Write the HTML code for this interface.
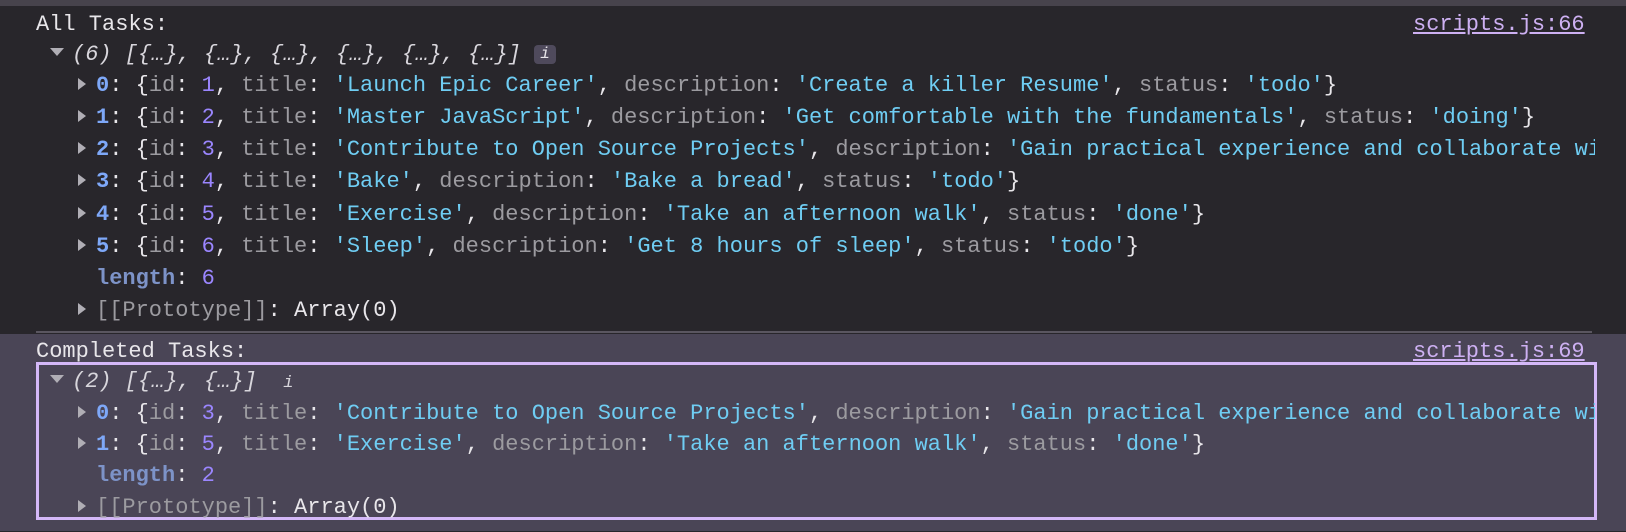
<!DOCTYPE html>
<html><head><style>
body{margin:0;width:1626px;height:532px;background:#28262b;overflow:hidden;font-family:"Liberation Mono","DejaVu Sans Mono",monospace;font-size:22px;color:#e8e6ea;position:relative}
.l{position:absolute;height:32px;line-height:32px;white-space:pre;overflow:hidden}
.k{color:#9c9ba0}.n{color:#9b86ff}.s{color:#6fcdf3}.i{color:#7ea8f8;font-weight:bold}.len{color:#7d93c8;font-weight:bold}
.t{display:inline-block;width:0;height:0;border-left:8px solid #b0aeb5;border-top:6px solid transparent;border-bottom:6px solid transparent;margin-right:10px;vertical-align:1px}
.d{display:inline-block;width:0;height:0;border-top:8px solid #b0aeb5;border-left:7px solid transparent;border-right:7px solid transparent;margin-right:8px;vertical-align:4px}
.it{font-style:italic;color:#d8d6dc}
.a{color:#cdb0f2;text-decoration:underline}
.ib{position:absolute;left:534px;top:45px;width:22px;height:19px;background:#4f4a5c;border-radius:4px;font-size:16px;line-height:19px;text-align:center;font-style:italic;color:#e8e6ea}
</style></head><body>
<div style="position:absolute;left:0;top:0;width:1626px;height:6px;background:#47434c"></div>
<div style="position:absolute;left:0;top:334px;width:1626px;height:197px;background:#4a4556"></div>
<div style="position:absolute;left:36px;top:331px;width:1556px;height:2px;background:#5a5660"></div>
<div style="position:absolute;left:36px;top:362px;width:1555px;height:152px;border:3px solid #d4b8f8"></div>

<div class="l" style="left:36px;top:9px">All Tasks:</div>
<div class="l a" style="left:1413px;top:9px">scripts.js:66</div>
<div class="l" style="left:50px;top:39px"><span class="d"></span><span class="it">(6) [{…}, {…}, {…}, {…}, {…}, {…}]</span></div>
<div class="ib">i</div>
<div class="l" style="left:78px;top:70px;width:1517px"><span class="t"></span><span class="i">0</span>: {<span class="k">id</span>: <span class="n">1</span>, <span class="k">title</span>: <span class="s">'Launch Epic Career'</span>, <span class="k">description</span>: <span class="s">'Create a killer Resume'</span>, <span class="k">status</span>: <span class="s">'todo'</span>}</div>
<div class="l" style="left:78px;top:102px;width:1517px"><span class="t"></span><span class="i">1</span>: {<span class="k">id</span>: <span class="n">2</span>, <span class="k">title</span>: <span class="s">'Master JavaScript'</span>, <span class="k">description</span>: <span class="s">'Get comfortable with the fundamentals'</span>, <span class="k">status</span>: <span class="s">'doing'</span>}</div>
<div class="l" style="left:78px;top:134px;width:1517px"><span class="t"></span><span class="i">2</span>: {<span class="k">id</span>: <span class="n">3</span>, <span class="k">title</span>: <span class="s">'Contribute to Open Source Projects'</span>, <span class="k">description</span>: <span class="s">'Gain practical experience and collaborate with others'</span>}</div>
<div class="l" style="left:78px;top:166px;width:1517px"><span class="t"></span><span class="i">3</span>: {<span class="k">id</span>: <span class="n">4</span>, <span class="k">title</span>: <span class="s">'Bake'</span>, <span class="k">description</span>: <span class="s">'Bake a bread'</span>, <span class="k">status</span>: <span class="s">'todo'</span>}</div>
<div class="l" style="left:78px;top:199px;width:1517px"><span class="t"></span><span class="i">4</span>: {<span class="k">id</span>: <span class="n">5</span>, <span class="k">title</span>: <span class="s">'Exercise'</span>, <span class="k">description</span>: <span class="s">'Take an afternoon walk'</span>, <span class="k">status</span>: <span class="s">'done'</span>}</div>
<div class="l" style="left:78px;top:231px;width:1517px"><span class="t"></span><span class="i">5</span>: {<span class="k">id</span>: <span class="n">6</span>, <span class="k">title</span>: <span class="s">'Sleep'</span>, <span class="k">description</span>: <span class="s">'Get 8 hours of sleep'</span>, <span class="k">status</span>: <span class="s">'todo'</span>}</div>
<div class="l" style="left:96px;top:263px"><span class="len">length</span>: <span class="n">6</span></div>
<div class="l" style="left:78px;top:295px"><span class="t"></span><span class="k">[[Prototype]]</span>: Array(0)</div>

<div class="l" style="left:36px;top:336px">Completed Tasks:</div>
<div class="l a" style="left:1413px;top:336px">scripts.js:69</div>
<div class="l" style="left:50px;top:366px"><span class="d"></span><span class="it">(2) [{…}, {…}]</span>  <span class="it" style="font-size:17px">i</span></div>
<div class="l" style="left:78px;top:398px;width:1517px"><span class="t"></span><span class="i">0</span>: {<span class="k">id</span>: <span class="n">3</span>, <span class="k">title</span>: <span class="s">'Contribute to Open Source Projects'</span>, <span class="k">description</span>: <span class="s">'Gain practical experience and collaborate with others'</span>}</div>
<div class="l" style="left:78px;top:429px;width:1517px"><span class="t"></span><span class="i">1</span>: {<span class="k">id</span>: <span class="n">5</span>, <span class="k">title</span>: <span class="s">'Exercise'</span>, <span class="k">description</span>: <span class="s">'Take an afternoon walk'</span>, <span class="k">status</span>: <span class="s">'done'</span>}</div>
<div class="l" style="left:96px;top:460px"><span class="len">length</span>: <span class="n">2</span></div>
<div class="l" style="left:78px;top:492px"><span class="t"></span><span class="k">[[Prototype]]</span>: Array(0)</div>
</body></html>
